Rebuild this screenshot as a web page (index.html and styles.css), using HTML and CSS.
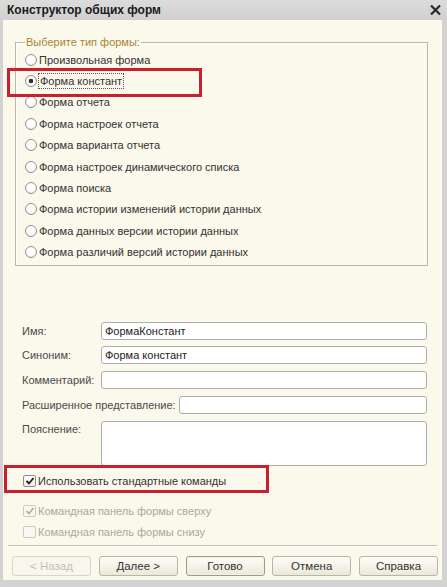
FILE: index.html
```html
<!DOCTYPE html>
<html lang="ru">
<head>
    <meta charset="UTF-8" />
    <meta name="viewport" content="width=device-width, initial-scale=1" />
    <title>Конструктор общих форм</title>
    <link rel="stylesheet" href="styles.css">
</head>
<body>
    <div class="window">
        <div class="titlebar">
            <span class="title">Конструктор общих форм</span>
            <svg class="close" width="11" height="10" viewBox="0 0 11 10">
                <path d="M1 0.5 L10 9.5 M10 0.5 L1 9.5" stroke="#2b2b2b" stroke-width="2.2" fill="none" />
            </svg>
        </div>

        <div class="content">
            <fieldset class="types">
                <legend>Выберите тип формы:</legend>
                <div class="radio"><span class="radio-box"></span>Произвольная форма</div>
                <div class="radio"><span class="radio-box checked"></span><span class="focus">Форма констант</span></div>
                <div class="radio"><span class="radio-box"></span>Форма отчета</div>
                <div class="radio"><span class="radio-box"></span>Форма настроек отчета</div>
                <div class="radio"><span class="radio-box"></span>Форма варианта отчета</div>
                <div class="radio"><span class="radio-box"></span>Форма настроек динамического списка</div>
                <div class="radio"><span class="radio-box"></span>Форма поиска</div>
                <div class="radio"><span class="radio-box"></span>Форма истории изменений истории данных</div>
                <div class="radio"><span class="radio-box"></span>Форма данных версии истории данных</div>
                <div class="radio"><span class="radio-box"></span>Форма различий версий истории данных</div>
            </fieldset>

            <div class="fields">
                <div class="field">
                    <span class="field-label">Имя:</span>
                    <span class="input">ФормаКонстант</span>
                </div>
                <div class="field">
                    <span class="field-label">Синоним:</span>
                    <span class="input">Форма констант</span>
                </div>
                <div class="field">
                    <span class="field-label">Комментарий:</span>
                    <span class="input"></span>
                </div>
                <div class="field">
                    <span class="field-label auto">Расширенное представление:</span>
                    <span class="input"></span>
                </div>
                <div class="field top">
                    <span class="field-label">Пояснение:</span>
                    <span class="input textarea"></span>
                </div>
            </div>

            <div class="checks">
                <div class="check">
                    <span class="check-box">
                        <svg width="10" height="10" viewBox="0 0 10 10"><path d="M1.5 5 L4 7.5 L8.5 2" stroke="#1e1e1e" stroke-width="1.8" fill="none" /></svg>
                    </span>
                    Использовать стандартные команды
                </div>
                <div class="check disabled first-sub">
                    <span class="check-box">
                        <svg width="10" height="10" viewBox="0 0 10 10"><path d="M1.5 5 L4 7.5 L8.5 2" stroke="#b4b2a8" stroke-width="1.8" fill="none" /></svg>
                    </span>
                    Командная панель формы сверху
                </div>
                <div class="check disabled">
                    <span class="check-box"></span>
                    Командная панель формы снизу
                </div>
            </div>

            <div class="separator"></div>

            <div class="buttons">
                <button class="btn" disabled>&lt; Назад</button>
                <button class="btn">Далее &gt;</button>
                <button class="btn default">Готово</button>
                <button class="btn">Отмена</button>
                <button class="btn">Справка</button>
            </div>
        </div>

        <!-- красные рамки-выделения поверх формы -->
        <div class="mark mark-type"></div>
        <div class="mark mark-commands"></div>
    </div>
</body>
</html>
```

FILE: styles.css
```css
body {
    margin: 0;
    background: #d3d3d3;
    font-family: "Liberation Sans", Arial, sans-serif;
    font-size: 11px;
    color: #333;
}
.window {
    position: relative;
    width: 447px;
    height: 587px;
    box-sizing: border-box;
    padding: 0 5px 7px 3px;
    display: flex;
    flex-direction: column;
    background: #d3d3d3;
}
.titlebar {
    height: 20px;
    margin: 0 -5px 0 -3px;
    padding: 0 6px 0 7px;
    display: flex;
    align-items: center;
    justify-content: space-between;
    background: linear-gradient(#dcdcdc, #d0d0d0);
}
.title {
    font-weight: 700;
    font-size: 12px;
    color: #1a1a1a;
}
.content {
    flex: 1;
    background: #fbf8ec;
    display: flex;
    flex-direction: column;
}

/* группа переключателей */
.types {
    margin: 15px 14px 0 12px;
    padding: 0 0 2px 9px;
    border: 1px solid #bcb8a8;
    box-shadow: inset 1px 1px 0 #fff;
}
.types legend {
    padding: 0 1px;
    line-height: 14px;
    color: #a8842c;
}
.radio {
    height: 21.4px;
    display: flex;
    align-items: center;
    gap: 2px;
    color: #333;
}
.radio-box {
    width: 12px;
    height: 12px;
    box-sizing: border-box;
    border-radius: 50%;
    border: 1px solid #929292;
    background: radial-gradient(circle at 50% 35%, #fff 45%, #e6e6e6 100%);
    flex: none;
}
.radio-box.checked {
    background: radial-gradient(circle, #2f2f2f 0 2px, #fff 2.6px 50%, #e6e6e6 100%);
}
.focus {
    outline: 1px dotted #555;
    padding: 0 1px;
    line-height: 14px;
}

/* поля */
.fields {
    margin: 55.7px 15px 0 19px;
    display: flex;
    flex-direction: column;
    gap: 6.75px;
}
.field {
    display: flex;
    align-items: center;
}
.field.top {
    align-items: flex-start;
}
.field.top .field-label {
    padding-top: 2px;
}
.field-label {
    width: 79px;
    flex: none;
    color: #4a4a4a;
}
.field-label.auto {
    width: auto;
    margin-right: 3px;
}
.input {
    flex: 1;
    height: 18px;
    box-sizing: border-box;
    border: 1px solid #adadad;
    border-radius: 3px;
    background: #fff;
    padding-left: 3px;
    line-height: 16px;
    color: #222;
}
.input.textarea {
    height: 45px;
}

/* флажки */
.checks {
    margin: 5px 0 0 20px;
}
.check {
    height: 20px;
    display: flex;
    align-items: center;
    gap: 2px;
    color: #333;
}
.check.first-sub {
    margin-top: 10px;
}
.check.disabled {
    color: #aaa89f;
    margin-bottom: 1px;
}
.check-box {
    width: 13px;
    height: 12px;
    box-sizing: border-box;
    border: 1px solid #8f8f8f;
    border-radius: 2px;
    background: linear-gradient(#fff, #ececec);
    display: flex;
    align-items: center;
    justify-content: center;
    flex: none;
}
.check.disabled .check-box {
    border-color: #cbc9c0;
    background: #f9f8f2;
}

.separator {
    margin: 2px 5px 0 5px;
    border-top: 1px solid #c4c0b0;
    border-bottom: 1px solid #fff;
}

/* кнопки */
.buttons {
    margin: 9px 4px 0 9px;
    display: flex;
    justify-content: space-between;
}
.btn {
    width: 79px;
    height: 20px;
    padding: 0;
    border: 1px solid #bab6a6;
    border-radius: 3px;
    background: linear-gradient(#fefdf8, #ebe8da);
    font-family: inherit;
    font-size: 11.5px;
    color: #333;
}
.btn.default {
    border-color: #9f9b8c;
    box-shadow: inset 0 0 0 1px #f3f0e4;
}
.btn:disabled {
    color: #c4c2b8;
    border-color: #d9d6c9;
    background: #f8f6ed;
}

.mark {
    position: absolute;
    box-sizing: border-box;
    border: 3px solid #c8202e;
}
.mark-type {
    left: 7px;
    top: 68px;
    width: 195px;
    height: 29px;
}
.mark-commands {
    left: 4px;
    top: 465px;
    width: 265px;
    height: 28px;
}
```
